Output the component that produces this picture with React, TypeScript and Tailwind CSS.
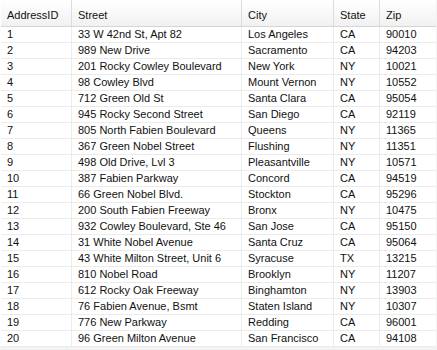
import React from "react";

const rows: [number, string, string, string, string][] = [
  [1, "33 W 42nd St, Apt 82", "Los Angeles", "CA", "90010"],
  [2, "989 New Drive", "Sacramento", "CA", "94203"],
  [3, "201 Rocky Cowley Boulevard", "New York", "NY", "10021"],
  [4, "98 Cowley Blvd", "Mount Vernon", "NY", "10552"],
  [5, "712 Green Old St", "Santa Clara", "CA", "95054"],
  [6, "945 Rocky Second Street", "San Diego", "CA", "92119"],
  [7, "805 North Fabien Boulevard", "Queens", "NY", "11365"],
  [8, "367 Green Nobel Street", "Flushing", "NY", "11351"],
  [9, "498 Old Drive, Lvl 3", "Pleasantville", "NY", "10571"],
  [10, "387 Fabien Parkway", "Concord", "CA", "94519"],
  [11, "66 Green Nobel Blvd.", "Stockton", "CA", "95296"],
  [12, "200 South Fabien Freeway", "Bronx", "NY", "10475"],
  [13, "932 Cowley Boulevard, Ste 46", "San Jose", "CA", "95150"],
  [14, "31 White Nobel Avenue", "Santa Cruz", "CA", "95064"],
  [15, "43 White Milton Street, Unit 6", "Syracuse", "TX", "13215"],
  [16, "810 Nobel Road", "Brooklyn", "NY", "11207"],
  [17, "612 Rocky Oak Freeway", "Binghamton", "NY", "13903"],
  [18, "76 Fabien Avenue, Bsmt", "Staten Island", "NY", "10307"],
  [19, "776 New Parkway", "Redding", "CA", "96001"],
  [20, "96 Green Milton Avenue", "San Francisco", "CA", "94108"],
];

const cols = "grid grid-cols-[71px_170px_92px_46px_55px]";

export default function App() {
  return (
    <div
      className="w-[437px] h-[350px] bg-[#f3f3f3] text-[#111] text-[11px] overflow-hidden"
      style={{ fontFamily: '"Liberation Sans", Arial, sans-serif' }}
    >
      <div className="bg-white pl-[1px] w-[436px]">
        <div className={`${cols} h-[27px] bg-gradient-to-b from-[#ffffff] to-[#f1f1f1] border-b border-[#d5d5d5]`}>
          {["AddressID", "Street", "City", "State", "Zip"].map((h, i) => (
            <div
              key={h}
              className={`flex items-center pl-[6px] pt-[4px] ${i < 4 ? "border-r border-[#dcdcdc]" : ""}`}
            >
              {h}
            </div>
          ))}
        </div>
        {rows.map((r) => (
          <div key={r[0]} className={`${cols} h-[16px] border-b border-[#ececec]`}>
            {r.map((c, i) => (
              <div
                key={i}
                className={`flex items-center pl-[6px] leading-none whitespace-nowrap overflow-hidden ${i < 4 ? "border-r border-[#ececec]" : ""}`}
              >
                {c}
              </div>
            ))}
          </div>
        ))}
      </div>
    </div>
  );
}
